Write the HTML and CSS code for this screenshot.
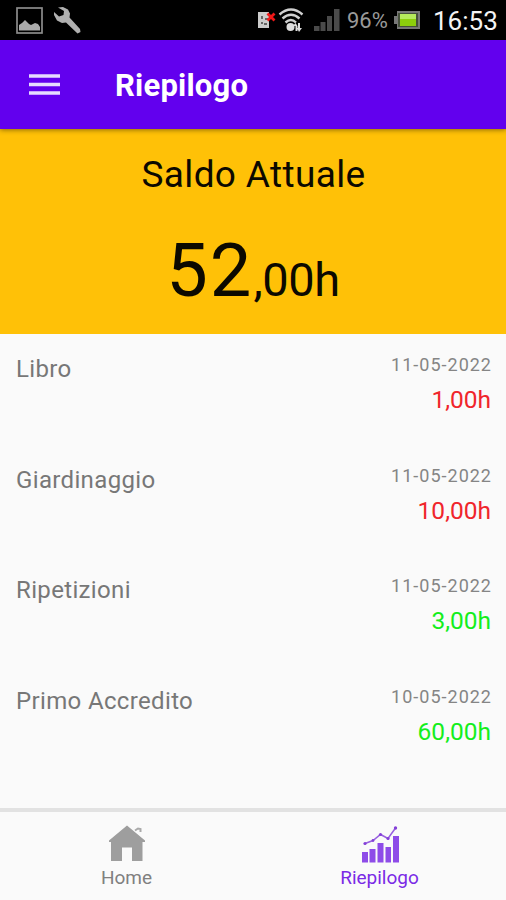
FILE: index.html
```html
<!DOCTYPE html>
<html lang="it">
<head>
    <meta charset="UTF-8">
    <meta name="viewport" content="width=device-width, initial-scale=1.0">
    <title>Riepilogo</title>
    <link rel="stylesheet" href="styles.css">
</head>
<body>
    <div class="app">
        <div class="status-bar">
            <svg class="icon-picture" width="27" height="27" viewBox="0 0 27 27">
                <rect x="1" y="1" width="25" height="25" fill="none" stroke="#8c8c8c" stroke-width="1.7"/>
                <path d="M3 23.500V18l3-2 3-3 4 4 2 1 4-2 3 1 2 3v3.500z" fill="#aaa"/>
            </svg>
            <svg class="icon-wrench" width="28" height="28" viewBox="0 0 28 28">
                <path d="M5 1.500L10 1l5 2.500 2 4-.5 4L27 23l.5 3-3 1.500L13 16.500l-4 .5-5-2.500L1 9V6l5 4.500 4.500-1.500.5-4z" fill="#b0b0b0"/>
            </svg>
            <svg class="icon-sim" width="19" height="19" viewBox="0 0 19 19">
                <path d="M1 1h11v16H1z" fill="#ccc"/>
                <path d="M4 5h2v3H4zM8 7h3v2H8zM4 11h2v2H4zM7 12h3v2H7z" fill="#666"/>
                <path d="M10.500 2.500l7 7M17.500 2.500l-7 7" stroke="#f01818" stroke-width="2.800"/>
            </svg>
            <svg class="icon-wifi" width="26" height="24" viewBox="0 0 26 24">
                <path d="M1.500 6.500Q13-3.500 24.500 6.500M4.500 10.500Q13 3 21.500 10.500M7.500 14.500Q13 9.500 18 14.500" fill="none" stroke="#d0d0d0" stroke-width="2.400"/>
                <circle cx="12.500" cy="19" r="4" fill="#ddd"/>
                <path d="M15 18l2.500-3 2 3v5h-2v-5zM19 20h1v-5h2v5h2l-3 4z" fill="#ddd"/>
            </svg>
            <svg class="icon-signal" width="26" height="24" viewBox="0 0 26 24">
                <path d="M0 18h5.500v5H0zM6.500 14h5v9h-5zM13 8h5v15h-5zM20 1h5.500v22h-5.500z" fill="#4a4a4a"/>
            </svg>
            <span class="battery-level">96%</span>
            <svg class="icon-battery" width="26" height="18" viewBox="0 0 26 18">
                <path d="M0 5h3V0h23v18H3v-5H0z" fill="#777"/>
                <rect x="4" y="2" width="20" height="14" fill="#46503a"/>
                <rect x="6" y="3" width="16" height="12" fill="#8cce0c"/>
                <rect x="6" y="3" width="16" height="5" fill="#b5ea5c"/>
            </svg>
            <span class="clock">16:53</span>
        </div>

        <header class="toolbar">
            <svg width="31" height="22" viewBox="0 0 31 22">
                <path d="M0 2h31M0 10.500h31M0 19h31" stroke="#e6dcff" stroke-width="3.600"/>
            </svg>
            <h1>Riepilogo</h1>
        </header>

        <section class="balance">
            <h2>Saldo Attuale</h2>
            <p><span class="balance-int">52</span><span class="balance-dec">,00h</span></p>
        </section>

        <ul class="movements">
            <li>
                <span class="name">Libro</span>
                <div class="details">
                    <span class="date">11-05-2022</span>
                    <span class="amount out">1,00h</span>
                </div>
            </li>
            <li>
                <span class="name">Giardinaggio</span>
                <div class="details">
                    <span class="date">11-05-2022</span>
                    <span class="amount out">10,00h</span>
                </div>
            </li>
            <li>
                <span class="name">Ripetizioni</span>
                <div class="details">
                    <span class="date">11-05-2022</span>
                    <span class="amount in">3,00h</span>
                </div>
            </li>
            <li>
                <span class="name">Primo Accredito</span>
                <div class="details">
                    <span class="date">10-05-2022</span>
                    <span class="amount in">60,00h</span>
                </div>
            </li>
        </ul>

        <nav class="bottom-nav">
            <a class="nav-item">
                <svg width="38" height="38" viewBox="0 0 38 38">
                    <path d="M19 .5L37 15.500V17h-2.500v19H24V22.500H14V36H3V17H1v-1.500z" fill="#9e9e9e"/>
                    <path d="M27 5.500l3-2 2.500.5v3" fill="none" stroke="#aaa" stroke-width="2"/>
                </svg>
                <span>Home</span>
            </a>
            <a class="nav-item active">
                <svg width="38" height="38" viewBox="0 0 38 38">
                    <path d="M1 27h6v10.500H1zM8.500 24h6v13.500h-6zM16.500 18h6v19.500h-6zM24.500 22h5.500v15.500h-5.500zM32 11h6v26.500h-6z" fill="#8e4ce8"/>
                    <path d="M4 18.500l8-3 7.500-6 7.500 4L34.500 3" fill="none" stroke="#9860e0" stroke-width="1.500"/>
                    <g fill="#8440d8">
                        <circle cx="4" cy="18.500" r="1.600"/>
                        <circle cx="12" cy="15.500" r="1.400"/>
                        <circle cx="19.500" cy="9.500" r="1.600"/>
                        <circle cx="27" cy="13.500" r="1.600"/>
                        <circle cx="34.500" cy="3" r="1.700"/>
                    </g>
                </svg>
                <span>Riepilogo</span>
            </a>
        </nav>
    </div>
</body>
</html>
```
FILE: styles.css
```css
:root {
    --primary: #6200ee;
    --amber: #ffc107;
    --background: #fafafa;
    --text-grey: #777;
}

* {
    margin: 0;
    padding: 0;
    box-sizing: border-box;
}

body {
    font-family: Roboto, sans-serif;
    background: var(--background);
}

.app {
    display: flex;
    flex-direction: column;
    height: 900px;
    overflow: hidden;
}

.status-bar {
    display: flex;
    align-items: center;
    height: 40px;
    padding: 0 8px 0 16px;
    background: #000;
    white-space: nowrap;
}

.icon-wrench {
    margin-left: 10px;
}

.icon-sim {
    margin-left: auto;
}

.icon-wifi {
    margin-left: 2px;
}

.icon-signal {
    margin-left: 10px;
}

.battery-level {
    width: 41px;
    margin-left: 7px;
    color: #999;
    font-size: 22px;
    line-height: 40px;
    margin-top: 2px;
}

.icon-battery {
    margin-left: 6px;
}

.clock {
    width: 65px;
    margin-left: 13px;
    color: #f4f4f4;
    font-size: 26px;
    line-height: 42px;
    margin-top: 2px;
}

.toolbar {
    display: flex;
    align-items: center;
    height: 89px;
    padding-left: 29px;
    background: var(--primary);
    box-shadow: 0 1px 5px rgba(0, 0, 0, 0.45);
    z-index: 1;
}

.toolbar h1 {
    margin: 2px 0 0 55px;
    color: #fff;
    font-size: 31px;
    font-weight: 700;
    letter-spacing: 0.2px;
}

.balance {
    height: 205px;
    padding-top: 23px;
    background: var(--amber);
    color: #0c0900;
    text-align: center;
}

.balance h2 {
    padding-left: 1px;
    font-size: 37px;
    font-weight: 400;
    line-height: 46px;
    letter-spacing: 0.35px;
}

.balance p {
    margin-top: 28px;
    line-height: 90px;
}

.balance-int {
    font-size: 74px;
    letter-spacing: 2px;
}

.balance-dec {
    font-size: 47px;
    letter-spacing: -0.4px;
}

.movements {
    flex: 1;
    list-style: none;
}

.movements li {
    display: flex;
    justify-content: space-between;
    height: 110.7px;
    padding: 17px 15px 0 16px;
}

.name {
    color: var(--text-grey);
    font-size: 24px;
    line-height: 36px;
    letter-spacing: 0.35px;
}

.details {
    display: flex;
    flex-direction: column;
    align-items: flex-end;
}

.date {
    margin-right: -1px;
    color: #858585;
    font-size: 18px;
    line-height: 28px;
    letter-spacing: 1px;
}

.amount {
    font-size: 24.5px;
    line-height: 36px;
    margin-top: 3px;
}

.amount.out {
    color: #f0252b;
}

.amount.in {
    color: #14ee1c;
}

.bottom-nav {
    display: flex;
    height: 92px;
    border-top: 4px solid #e2e2e2;
}

.nav-item {
    flex: 1;
    display: flex;
    flex-direction: column;
    align-items: center;
    padding-top: 13px;
    color: #808080;
    font-size: 19px;
    line-height: 30px;
}

.nav-item.active {
    color: #7a2ae6;
}
```
